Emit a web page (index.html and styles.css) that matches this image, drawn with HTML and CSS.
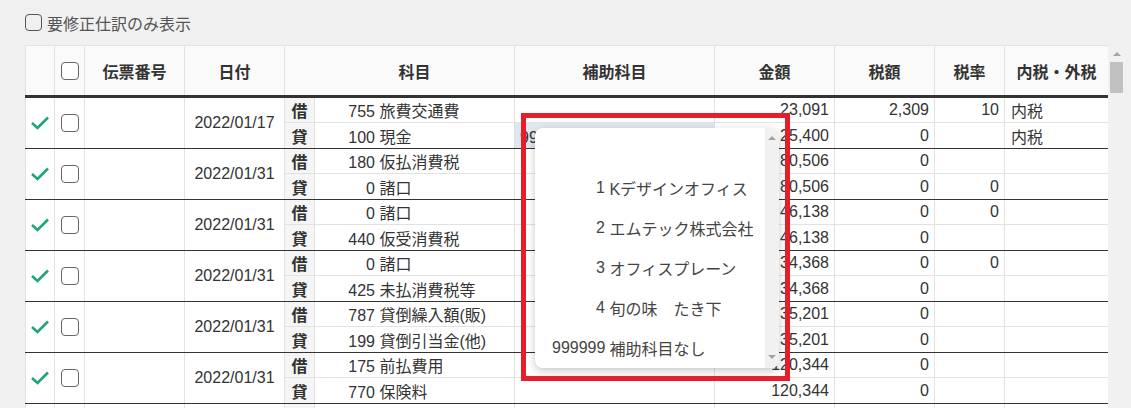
FILE: index.html
```html
<!DOCTYPE html>
<html lang="ja">
<head>
    <meta charset="UTF-8">
    <title>仕訳一覧</title>
    <link rel="stylesheet" href="styles.css">
</head>
<body>
    <div class="filter">
        <label class="filter-label"><input type="checkbox" class="cb cb-small"> 要修正仕訳のみ表示</label>
    </div>
    <div class="grid">
        <div class="grid-body">
            <table class="journal">
                <colgroup>
                    <col style="width:29px"><col style="width:30px"><col style="width:100px"><col style="width:100px">
                    <col style="width:30px"><col style="width:200px"><col style="width:200px"><col style="width:120px">
                    <col style="width:100px"><col style="width:70px"><col style="width:104px">
                </colgroup>
                <thead>
                    <tr>
                        <th></th>
                        <th><input type="checkbox" class="cb"></th>
                        <th>伝票番号</th>
                        <th>日付</th>
                        <th colspan="2" class="th-account">科目</th>
                        <th>補助科目</th>
                        <th>金額</th>
                        <th>税額</th>
                        <th>税率</th>
                        <th>内税・外税</th>
                    </tr>
                </thead>
                <tbody>
                    <tr class="dr">
                        <td rowspan="2" class="ok"><svg width="20" height="16" viewBox="0 0 20 16"><polyline points="2,8 7.5,13 18,2.5" fill="none" stroke="#1ea57c" stroke-width="2.6"/></svg></td>
                        <td rowspan="2" class="sel"><input type="checkbox" class="cb"></td>
                        <td rowspan="2"></td>
                        <td rowspan="2" class="date">2022/01/17</td>
                        <td class="side">借</td>
                        <td class="acct"><span class="code">755</span> 旅費交通費</td>
                        <td></td>
                        <td class="num">23,091</td>
                        <td class="num">2,309</td>
                        <td class="num">10</td>
                        <td class="tax">内税</td>
                    </tr>
                    <tr class="cr">
                        <td class="side">貸</td>
                        <td class="acct"><span class="code">100</span> 現金</td>
                        <td class="sub active">999999 補助科目なし</td>
                        <td class="num">25,400</td>
                        <td class="num">0</td>
                        <td class="num"></td>
                        <td class="tax">内税</td>
                    </tr>

                    <tr class="dr">
                        <td rowspan="2" class="ok"><svg width="20" height="16" viewBox="0 0 20 16"><polyline points="2,8 7.5,13 18,2.5" fill="none" stroke="#1ea57c" stroke-width="2.6"/></svg></td>
                        <td rowspan="2" class="sel"><input type="checkbox" class="cb"></td>
                        <td rowspan="2"></td>
                        <td rowspan="2" class="date">2022/01/31</td>
                        <td class="side">借</td>
                        <td class="acct"><span class="code">180</span> 仮払消費税</td>
                        <td></td>
                        <td class="num">80,506</td>
                        <td class="num">0</td>
                        <td class="num"></td>
                        <td class="tax"></td>
                    </tr>
                    <tr class="cr">
                        <td class="side">貸</td>
                        <td class="acct"><span class="code">0</span> 諸口</td>
                        <td></td>
                        <td class="num">80,506</td>
                        <td class="num">0</td>
                        <td class="num">0</td>
                        <td class="tax"></td>
                    </tr>

                    <tr class="dr">
                        <td rowspan="2" class="ok"><svg width="20" height="16" viewBox="0 0 20 16"><polyline points="2,8 7.5,13 18,2.5" fill="none" stroke="#1ea57c" stroke-width="2.6"/></svg></td>
                        <td rowspan="2" class="sel"><input type="checkbox" class="cb"></td>
                        <td rowspan="2"></td>
                        <td rowspan="2" class="date">2022/01/31</td>
                        <td class="side">借</td>
                        <td class="acct"><span class="code">0</span> 諸口</td>
                        <td></td>
                        <td class="num">46,138</td>
                        <td class="num">0</td>
                        <td class="num">0</td>
                        <td class="tax"></td>
                    </tr>
                    <tr class="cr">
                        <td class="side">貸</td>
                        <td class="acct"><span class="code">440</span> 仮受消費税</td>
                        <td></td>
                        <td class="num">46,138</td>
                        <td class="num">0</td>
                        <td class="num"></td>
                        <td class="tax"></td>
                    </tr>

                    <tr class="dr">
                        <td rowspan="2" class="ok"><svg width="20" height="16" viewBox="0 0 20 16"><polyline points="2,8 7.5,13 18,2.5" fill="none" stroke="#1ea57c" stroke-width="2.6"/></svg></td>
                        <td rowspan="2" class="sel"><input type="checkbox" class="cb"></td>
                        <td rowspan="2"></td>
                        <td rowspan="2" class="date">2022/01/31</td>
                        <td class="side">借</td>
                        <td class="acct"><span class="code">0</span> 諸口</td>
                        <td></td>
                        <td class="num">34,368</td>
                        <td class="num">0</td>
                        <td class="num">0</td>
                        <td class="tax"></td>
                    </tr>
                    <tr class="cr">
                        <td class="side">貸</td>
                        <td class="acct"><span class="code">425</span> 未払消費税等</td>
                        <td></td>
                        <td class="num">34,368</td>
                        <td class="num">0</td>
                        <td class="num"></td>
                        <td class="tax"></td>
                    </tr>

                    <tr class="dr">
                        <td rowspan="2" class="ok"><svg width="20" height="16" viewBox="0 0 20 16"><polyline points="2,8 7.5,13 18,2.5" fill="none" stroke="#1ea57c" stroke-width="2.6"/></svg></td>
                        <td rowspan="2" class="sel"><input type="checkbox" class="cb"></td>
                        <td rowspan="2"></td>
                        <td rowspan="2" class="date">2022/01/31</td>
                        <td class="side">借</td>
                        <td class="acct"><span class="code">787</span> 貸倒繰入額(販)</td>
                        <td></td>
                        <td class="num">35,201</td>
                        <td class="num">0</td>
                        <td class="num"></td>
                        <td class="tax"></td>
                    </tr>
                    <tr class="cr">
                        <td class="side">貸</td>
                        <td class="acct"><span class="code">199</span> 貸倒引当金(他)</td>
                        <td></td>
                        <td class="num">35,201</td>
                        <td class="num">0</td>
                        <td class="num"></td>
                        <td class="tax"></td>
                    </tr>

                    <tr class="dr">
                        <td rowspan="2" class="ok"><svg width="20" height="16" viewBox="0 0 20 16"><polyline points="2,8 7.5,13 18,2.5" fill="none" stroke="#1ea57c" stroke-width="2.6"/></svg></td>
                        <td rowspan="2" class="sel"><input type="checkbox" class="cb"></td>
                        <td rowspan="2"></td>
                        <td rowspan="2" class="date">2022/01/31</td>
                        <td class="side">借</td>
                        <td class="acct"><span class="code">175</span> 前払費用</td>
                        <td></td>
                        <td class="num">120,344</td>
                        <td class="num">0</td>
                        <td class="num"></td>
                        <td class="tax"></td>
                    </tr>
                    <tr class="cr">
                        <td class="side">貸</td>
                        <td class="acct"><span class="code">770</span> 保険料</td>
                        <td></td>
                        <td class="num">120,344</td>
                        <td class="num">0</td>
                        <td class="num"></td>
                        <td class="tax"></td>
                    </tr>

                    <!-- next row, scrolled out of view -->
                    <tr class="dr">
                        <td></td><td></td><td></td><td></td><td class="side"></td><td></td>
                        <td></td><td></td><td></td><td></td><td></td>
                    </tr>
                </tbody>
            </table>

            <!-- 補助科目の選択リスト -->
            <div class="picker">
                <ul class="picker-list">
                    <li class="opt"></li>
                    <li class="opt"><span class="code">1</span> Kデザインオフィス</li>
                    <li class="opt"><span class="code">2</span> エムテック株式会社</li>
                    <li class="opt"><span class="code">3</span> オフィスプレーン</li>
                    <li class="opt"><span class="code">4</span> 旬の味　たき下</li>
                    <li class="opt"><span class="code">999999</span> 補助科目なし</li>
                </ul>
                <div class="picker-track">
                    <span class="tri-up"></span>
                    <span class="tri-down"></span>
                </div>
            </div>
            <div class="mark"></div>
        </div>
        <div class="vscroll">
            <div class="vscroll-btn"><span class="tri-up"></span></div>
            <div class="vscroll-thumb"></div>
        </div>
    </div>
</body>
</html>
```

FILE: styles.css
```css
body {
    margin: 0;
    padding: 0 6px 0 25px;
    height: 408px;
    overflow: hidden;
    background-color: #f0f0f0;
    font-family: "Liberation Sans", "Noto Sans CJK JP", sans-serif;
    font-size: 16px;
    color: #333;
}
.filter {
    height: 45px;
    display: flex;
    align-items: center;
}
.filter-label {
    display: flex;
    align-items: center;
    gap: 5px;
    color: #555;
}
.cb {
    -webkit-appearance: none;
    appearance: none;
    margin: 0;
    width: 18px;
    height: 18px;
    border: 1px solid #666;
    border-radius: 4px;
    background: #fff;
    display: block;
}
.cb-small {
    width: 17px;
    height: 17px;
    border-color: #555;
    background: transparent;
}
.grid {
    display: flex;
    height: 363px;
}
.grid-body {
    position: relative;
    width: 1083px;
    overflow: hidden;
    background: #fff;
}
.journal {
    table-layout: fixed;
    width: 1083px;
    border-collapse: collapse;
}
.journal th {
    height: 49px;
    padding: 0;
    background-color: #fafafa;
    border: 1px solid #e2e2e2;
    border-bottom: 3px solid #333;
    font-weight: bold;
    text-align: center;
    color: #333;
}
.journal th .cb {
    margin: 0 auto;
}
.th-account {
    padding-left: 30px !important;
}
.journal td {
    padding: 0 5px;
    height: 24px;
    border: 1px solid #e2e2e2;
    white-space: nowrap;
    overflow: hidden;
}
.journal tr.cr td,
.journal td[rowspan] {
    border-bottom: 1px solid #333;
}
.journal tr.cr td {
    height: 25px;
}
.ok {
    text-align: center;
    padding: 0 !important;
}
.ok svg {
    display: block;
    margin: 0 auto;
}
.sel {
    padding: 0 !important;
}
.sel .cb {
    margin: 0 auto;
}
.date {
    text-align: center;
}
.side {
    text-align: center;
    font-weight: bold;
    background-color: #f5f5f5;
    padding: 0 !important;
}
.acct .code {
    display: inline-block;
    width: 55px;
    text-align: right;
}
.num {
    text-align: right;
}
.tax {
    padding-left: 6px !important;
}
.sub.active {
    background-color: #dfe7ef;
}

/* dropdown */
.picker {
    position: absolute;
    left: 510px;
    top: 83px;
    width: 244px;
    height: 240px;
    display: flex;
    background: #fff;
    border-radius: 8px;
    overflow: hidden;
    box-shadow: 0 3px 9px rgba(0, 0, 0, 0.22);
    z-index: 2;
}
.picker-list {
    list-style: none;
    margin: 0;
    padding: 0;
    flex: 1;
}
.opt {
    height: 40px;
    display: flex;
    align-items: center;
    padding-left: 17px;
    color: #444;
    white-space: pre;
}
.opt .code {
    display: inline-block;
    width: 53px;
    text-align: right;
}
.picker-track {
    width: 14px;
    background: #f1f1f1;
    display: flex;
    flex-direction: column;
    justify-content: space-between;
    align-items: center;
    padding: 8px 0 9px;
}
.tri-up {
    width: 0;
    height: 0;
    border-left: 4px solid transparent;
    border-right: 4px solid transparent;
    border-bottom: 4px solid #a3a3a3;
}
.tri-down {
    width: 0;
    height: 0;
    border-left: 4px solid transparent;
    border-right: 4px solid transparent;
    border-top: 4px solid #a3a3a3;
}
.mark {
    position: absolute;
    left: 496px;
    top: 68px;
    width: 259px;
    height: 258px;
    border: 5px solid #e61e2a;
    z-index: 3;
}

/* page scrollbar */
.vscroll {
    width: 17px;
    background: #f1f1f1;
}
.vscroll-btn {
    height: 17px;
    display: flex;
    align-items: center;
    justify-content: center;
}
.vscroll-thumb {
    margin: 0 2px;
    height: 31px;
    background: #c1c1c1;
}
```
